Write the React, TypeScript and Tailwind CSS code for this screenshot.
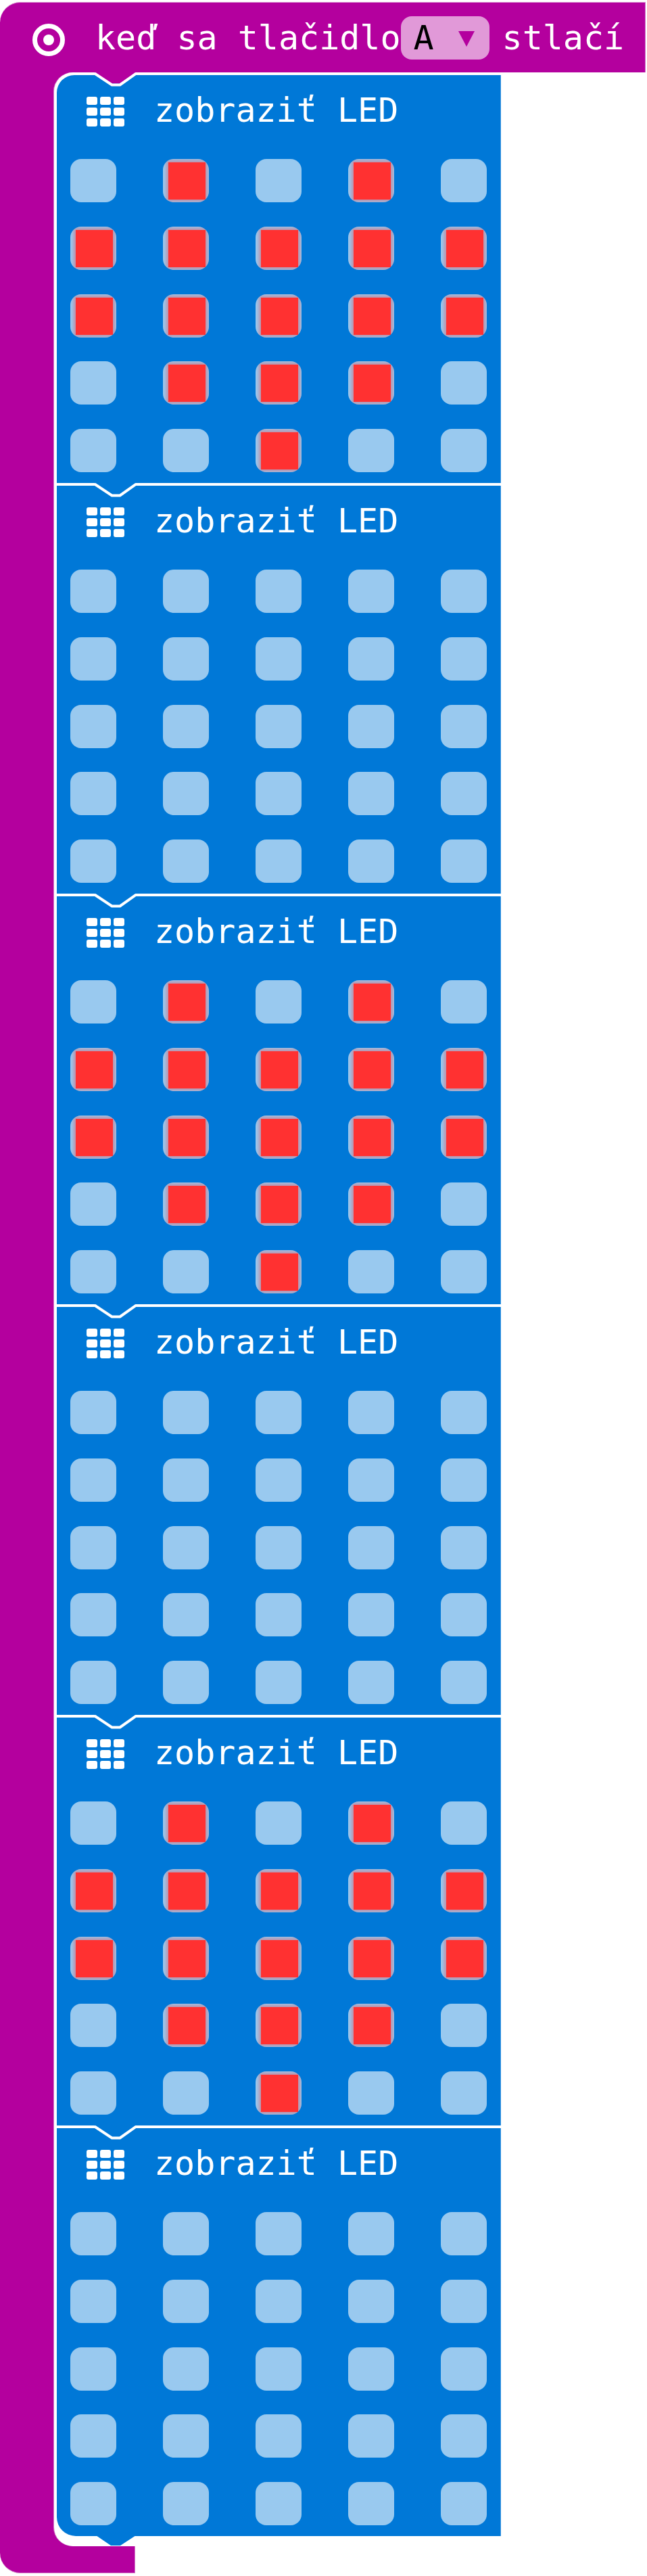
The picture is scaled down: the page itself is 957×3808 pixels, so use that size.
import React from "react";

const heart = [
  [0, 1, 0, 1, 0],
  [1, 1, 1, 1, 1],
  [1, 1, 1, 1, 1],
  [0, 1, 1, 1, 0],
  [0, 0, 1, 0, 0],
];

const empty = [
  [0, 0, 0, 0, 0],
  [0, 0, 0, 0, 0],
  [0, 0, 0, 0, 0],
  [0, 0, 0, 0, 0],
  [0, 0, 0, 0, 0],
];

const frames = [heart, empty, heart, empty, heart, empty];

const Led = ({ on }: { on: boolean }) => (
  <div className="h-[64px] w-[68px] overflow-hidden rounded-[16px] bg-[#99c9ef]">
    {on && (
      <div className="ml-[8px] mt-[5px] h-[55px] w-[55px] bg-[#ff3131] shadow-[0_0_5px_3px_rgba(255,49,49,0.38)]"></div>
    )}
  </div>
);

const GridIcon = () => (
  <div className="grid w-[56px] grid-cols-3 gap-x-[4px] gap-y-[4px]">
    {Array.from({ length: 9 }).map((_, i) => (
      <div key={i} className="h-[12px] rounded-[3px] bg-white"></div>
    ))}
  </div>
);

const Notch = ({ first }: { first: boolean }) => (
  <svg
    width="62"
    height="22"
    viewBox="0 0 62 22"
    className="absolute left-[56px] top-0"
  >
    <polygon
      points="0,0 25,16.5 38,16.5 61,0"
      fill={first ? "#b4009e" : "#0078d7"}
    />
    <polyline
      points="0,1.5 25.5,18.5 37.5,18.5 61.5,1.5"
      fill="none"
      stroke="#ffffff"
      strokeWidth="4"
    />
  </svg>
);

const ShowLeds = ({ leds, index }: { leds: number[][]; index: number }) => {
  const first = index === 0;
  const last = index === frames.length - 1;
  return (
    <div className={first ? "" : "border-t-4 border-white"}>
      <div
        className={`relative h-[603px] border-r border-[#3d96df] bg-[#0078d7] pl-[20px] ${
          first ? "rounded-tl-[26px]" : ""
        } ${last ? "rounded-bl-[28px]" : ""}`}
      >
        <div className="flex h-[124px] items-start pl-[24px] pt-[32px]">
          <GridIcon />
          <span className="ml-[44px] mt-[-9px] text-[50px] leading-[58px] text-white">
            zobraziť LED
          </span>
        </div>
        <div className="flex flex-col gap-[35.75px]">
          {leds.map((row, r) => (
            <div key={r} className="flex gap-[69px]">
              {row.map((v, c) => (
                <Led key={c} on={v === 1} />
              ))}
            </div>
          ))}
        </div>
        {last && (
          <svg
            width="62"
            height="16"
            viewBox="0 0 62 16"
            className="absolute bottom-[-15px] left-[58px]"
          >
            <polygon points="0,0 22,15 36,15 59,0" fill="#0078d7" />
          </svg>
        )}
      </div>
      {!first && <Notch first={false} />}
    </div>
  );
};

export default function App() {
  return (
    <div
      className="min-h-[3808px] bg-white pt-[3px]"
      style={{ fontFamily: '"DejaVu Sans Mono", monospace' }}
    >
      <div className="flex h-[104px] w-[955px] items-center rounded-tl-[30px] border-r border-t border-[#d680cb] bg-[#b4009e] pl-[48px] text-[50px] text-white">
        <svg width="48" height="48" viewBox="0 0 48 48" className="mt-[7px]">
          <circle cx="24" cy="24" r="20.5" fill="none" stroke="#fff" strokeWidth="7" />
          <circle cx="24" cy="24" r="8" fill="#fff" />
        </svg>
        <span className="ml-[45px] whitespace-pre leading-[58px]">keď sa tlačidlo</span>
        <div className="flex h-[64px] w-[131px] items-center rounded-[16px] bg-[#e199d8] pl-[19px] text-black">
          <span className="leading-[58px]">A</span>
          <svg width="24" height="24" viewBox="0 0 24 24" className="ml-[36px] mt-[5px]">
            <polygon points="0,0 24,0 12,23" fill="#b4009e" />
          </svg>
        </div>
        <span className="ml-[19px] leading-[58px]">stlačí</span>
      </div>
      <div className="w-[200px] rounded-bl-[30px] border-b border-r border-[#d680cb] bg-[#b4009e] pb-[39px] pl-[80px]">
        <div className="relative w-[661px] rounded-l-[28px] bg-white pb-[15px] pl-[4px] pt-[4px] shadow-[-1px_0_0_#d680cb]">
          {frames.map((leds, i) => (
            <div key={i} className="relative">
              <ShowLeds leds={leds} index={i} />
            </div>
          ))}
          <div className="absolute left-[4px] top-0">
            <Notch first={true} />
          </div>
        </div>
      </div>
    </div>
  );
}
